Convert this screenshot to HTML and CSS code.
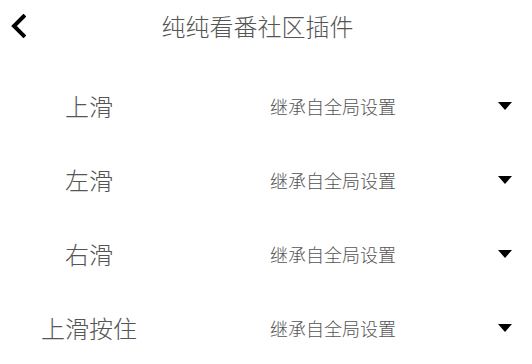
FILE: index.html
```html
<!DOCTYPE html>
<html lang="zh-CN">
<head>
<meta charset="utf-8">
<title>纯纯看番社区插件</title>
<link rel="stylesheet" href="styles.css">
</head>
<body>
<div class="page">
  <header class="toolbar">
    <button class="back" aria-label="返回">
      <svg width="16" height="24" viewBox="0 0 16 24"><path d="M13.5 2.5 L4 12 L13.5 21.5" fill="none" stroke="#000" stroke-width="4" stroke-linecap="square" stroke-linejoin="miter"/></svg>
    </button>
    <h1 class="title">纯纯看番社区插件</h1>
  </header>
  <ul class="list">
    <li class="row"><span class="label">上滑</span><span class="value">继承自全局设置</span><span class="caret"></span></li>
    <li class="row"><span class="label">左滑</span><span class="value">继承自全局设置</span><span class="caret"></span></li>
    <li class="row"><span class="label">右滑</span><span class="value">继承自全局设置</span><span class="caret"></span></li>
    <li class="row"><span class="label">上滑按住</span><span class="value">继承自全局设置</span><span class="caret"></span></li>
  </ul>
</div>
</body>
</html>
```
FILE: styles.css
```css
html, body {
  margin: 0;
  padding: 0;
  background: #fff;
}
body {
  font-family: "Noto Sans CJK SC", "Noto Sans", sans-serif;
  font-weight: 300;
  color: #555;
}
.page {
  width: 532px;
}
.toolbar {
  height: 52px;
  display: flex;
  align-items: center;
  padding-right: 65px;
}
.back {
  width: 48px;
  height: 52px;
  border: 0;
  background: none;
  padding: 0 0 0 10px;
  display: flex;
  align-items: center;
  justify-content: flex-start;
}
.back svg {
  display: block;
}
.title {
  flex: 1;
  margin: 0;
  text-align: center;
  font-size: 24px;
  font-weight: 300;
  line-height: 1;
  color: #555;
}
.list {
  list-style: none;
  margin: 17px 0 0;
  padding: 0;
}
.row {
  height: 74px;
  display: flex;
  align-items: center;
}
.label {
  width: 178px;
  text-align: center;
  font-size: 24px;
  line-height: 1;
}
.value {
  flex: 1;
  padding-left: 92px;
  font-size: 18px;
  line-height: 1;
  color: #555;
}
.caret {
  width: 0;
  height: 0;
  border-left: 7px solid transparent;
  border-right: 7px solid transparent;
  border-top: 8px solid #000;
  margin-right: 20px;
}
```
